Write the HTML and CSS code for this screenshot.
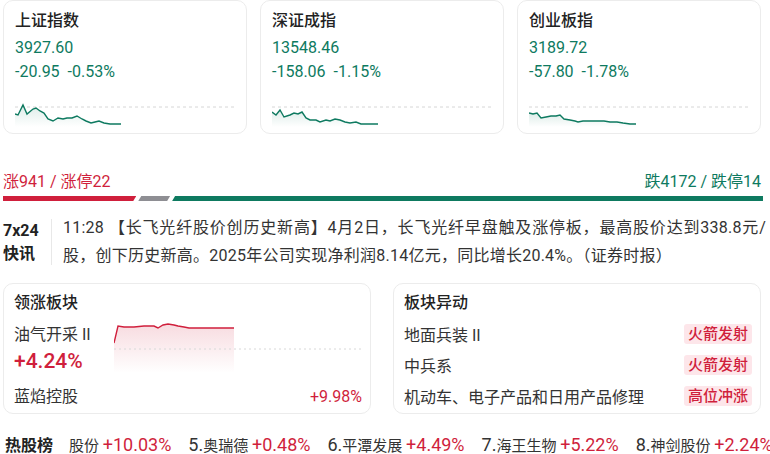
FILE: index.html
```html
<!DOCTYPE html>
<html lang="zh-CN">
<head>
  <meta charset="UTF-8">
  <meta name="viewport" content="width=device-width, initial-scale=1.0">
  <title>行情概览</title>
  <link rel="stylesheet" href="styles.css">
</head>
<body>
  <div class="page">
    <section class="indices">
      <div class="index-card">
        <div class="index-name">上证指数</div>
        <div class="index-price">3927.60</div>
        <div class="index-change"><span>-20.95</span><span>-0.53%</span></div>
        <svg class="spark" viewBox="0 0 220 27" preserveAspectRatio="none">
          <defs>
            <linearGradient id="gFill" x1="0" y1="0" x2="0" y2="1">
              <stop offset="0" stop-color="#0e7a60" stop-opacity="0.14"/>
              <stop offset="1" stop-color="#0e7a60" stop-opacity="0"/>
            </linearGradient>
          </defs>
          <line class="base" x1="0" y1="7" x2="220" y2="7"/>
          <polygon fill="url(#gFill)" points="0,14 3,15 8,5 12,14 18,9 21,8 25,11 29,13 33,19 38,21 43,18 48,19 52,18 57,18 62,16 67,19 71,21 76,23 80,22 84,21 89,23 95,24 106,24 106,27 0,27"/>
          <polyline class="line" points="0,14 3,15 8,5 12,14 18,9 21,8 25,11 29,13 33,19 38,21 43,18 48,19 52,18 57,18 62,16 67,19 71,21 76,23 80,22 84,21 89,23 95,24 106,24"/>
        </svg>
      </div>
      <div class="index-card">
        <div class="index-name">深证成指</div>
        <div class="index-price">13548.46</div>
        <div class="index-change"><span>-158.06</span><span>-1.15%</span></div>
        <svg class="spark" viewBox="0 0 220 27" preserveAspectRatio="none">
          <line class="base" x1="0" y1="7" x2="220" y2="7"/>
          <polygon fill="url(#gFill)" points="0,12 4,15 8,10 12,17 18,15 22,13 26,14 30,12 34,18 38,20 44,20 48,22 54,20 58,21 63,19 68,20 73,22 78,23 84,22 89,24 98,24 106,24 106,27 0,27"/>
          <polyline class="line" points="0,12 4,15 8,10 12,17 18,15 22,13 26,14 30,12 34,18 38,20 44,20 48,22 54,20 58,21 63,19 68,20 73,22 78,23 84,22 89,24 98,24 106,24"/>
        </svg>
      </div>
      <div class="index-card">
        <div class="index-name">创业板指</div>
        <div class="index-price">3189.72</div>
        <div class="index-change"><span>-57.80</span><span>-1.78%</span></div>
        <svg class="spark" viewBox="0 0 220 27" preserveAspectRatio="none">
          <line class="base" x1="0" y1="7" x2="220" y2="7"/>
          <polygon fill="url(#gFill)" points="0,13 4,14 8,13 12,18 17,17 22,16 27,16 31,15 35,19 41,20 46,21 49,22 54,21 61,21 68,21 75,21 81,22 88,22 94,23 101,24 107,24 107,27 0,27"/>
          <polyline class="line" points="0,13 4,14 8,13 12,18 17,17 22,16 27,16 31,15 35,19 41,20 46,21 49,22 54,21 61,21 68,21 75,21 81,22 88,22 94,23 101,24 107,24"/>
        </svg>
      </div>
    </section>

    <section class="breadth">
      <div class="breadth-labels">
        <span class="up">涨941 / 涨停22</span>
        <span class="down">跌4172 / 跌停14</span>
      </div>
      <div class="breadth-bar">
        <span class="seg seg-up" style="flex-grow:941"></span>
        <span class="seg seg-flat" style="flex-grow:225"></span>
        <span class="seg seg-down" style="flex-grow:4172"></span>
      </div>
    </section>

    <section class="news">
      <div class="news-tag"><b>7x24</b><b>快讯</b></div>
      <p class="news-text">11:28 【长飞光纤股价创历史新高】4月2日，长飞光纤早盘触及涨停板，最高股价达到338.8元/股，创下历史新高。2025年公司实现净利润8.14亿元，同比增长20.4%。（证券时报）</p>
    </section>

    <section class="boards">
      <div class="board-card">
        <div class="board-title">领涨板块</div>
        <div class="lead-row">
          <div class="lead-info">
            <div class="lead-name">油气开采 II</div>
            <div class="lead-pct">+4.24%</div>
          </div>
          <svg class="lead-chart" viewBox="0 0 247 50">
            <defs>
              <linearGradient id="rFill" x1="0" y1="0" x2="0" y2="1">
                <stop offset="0" stop-color="#d01f3c" stop-opacity="0.16"/>
                <stop offset="1" stop-color="#d01f3c" stop-opacity="0"/>
              </linearGradient>
            </defs>
            <polygon fill="url(#rFill)" points="0,20 4,3 10,4 20,4 30,3 40,3 44,5 49,2 54,1 60,2 64,3 70,4 75,5 84,5 90,5 94,5 104,5 114,5 120,5 120,50 0,50"/>
            <line class="base-dot" x1="0" y1="26" x2="247" y2="26"/>
            <polyline class="line-up" points="0,20 4,3 10,4 20,4 30,3 40,3 44,5 49,2 54,1 60,2 64,3 70,4 75,5 84,5 90,5 94,5 104,5 114,5 120,5"/>
          </svg>
        </div>
        <div class="lead-stock">
          <span>蓝焰控股</span>
          <span class="up">+9.98%</span>
        </div>
      </div>

      <div class="board-card">
        <div class="board-title">板块异动</div>
        <ul class="moves">
          <li><span>地面兵装 II</span><span class="tag">火箭发射</span></li>
          <li><span>中兵系</span><span class="tag">火箭发射</span></li>
          <li><span>机动车、电子产品和日用产品修理</span><span class="tag">高位冲涨</span></li>
        </ul>
      </div>
    </section>

    <section class="hot">
      <b class="hot-title">热股榜</b>
      <div class="hot-track">
        <div class="hot-list">
          <span>股份 <em>+10.03%</em></span>
          <span><i>5.</i>奥瑞德 <em>+0.48%</em></span>
          <span><i>6.</i>平潭发展 <em>+4.49%</em></span>
          <span><i>7.</i>海王生物 <em>+5.22%</em></span>
          <span><i>8.</i>神剑股份 <em>+2.24%</em></span>
        </div>
      </div>
    </section>
  </div>
</body>
</html>
```

FILE: styles.css
```css
* { box-sizing: border-box; }
body {
  margin: 0;
  background: #fff;
  color: #333;
  font-family: Roboto, "Noto Sans CJK SC", sans-serif;
  font-size: 16px;
  overflow: hidden;
}

.page {
  width: 770px;
  padding: 0 9px 0 3px;
}

.up { color: #d01f3c; }
.down { color: #0e7a60; }

/* index cards */
.indices {
  display: grid;
  grid-template-columns: repeat(3, 1fr);
  gap: 13px;
}

.index-card {
  border: 1px solid #ececec;
  border-radius: 10px;
  padding: 9px 11px 6px;
  height: 134px;
}

.index-name {
  font-weight: 500;
  line-height: 22px;
  color: #222;
  margin-bottom: 4px;
}

.index-price, .index-change {
  color: #0e7a60;
  line-height: 24px;
}

.index-change span + span { margin-left: 8px; }

.spark {
  display: block;
  width: 100%;
  height: 27px;
  margin-top: 16px;
}

.spark .base, .lead-chart .base-dot {
  stroke: #d6d6d6;
  stroke-width: 1;
  stroke-dasharray: 3 3;
}
.spark .line {
  fill: none;
  stroke: #0e7a60;
  stroke-width: 1.4;
}

/* up / down breadth */
.breadth { margin-top: 37px; }

.breadth-labels {
  display: flex;
  justify-content: space-between;
  line-height: 22px;
  font-size: 16px;
}

.breadth-bar {
  display: flex;
  height: 5px;
  margin: 3px -2px 0 0;
}

.seg { display: block; height: 100%; }
.seg-up {
  background: #d01f3c;
  clip-path: polygon(0 0, 100% 0, calc(100% - 3px) 100%, 0 100%);
  margin-right: -1px;
}
.seg-flat {
  background: #8e8e93;
  clip-path: polygon(3px 0, 100% 0, calc(100% - 3px) 100%, 0 100%);
  margin-left: 3px;
  margin-right: -1px;
}
.seg-down {
  background: #0e7a60;
  clip-path: polygon(3px 0, 100% 0, 100% 100%, 0 100%);
  margin-left: 3px;
}

/* news */
.news {
  display: flex;
  align-items: center;
  margin: 13px -5px 0 0;
}

.news-tag {
  display: flex;
  flex-direction: column;
  width: 49px;
  flex-shrink: 0;
  border-right: 1px solid #e8e8e8;
  line-height: 23px;
  font-size: 16px;
  color: #222;
}

.news-text {
  margin: 0;
  padding-left: 11px;
  line-height: 28px;
  letter-spacing: 0.25px;
  text-align: justify;
  color: #333;
}

/* boards */
.boards {
  display: grid;
  grid-template-columns: 1fr 1fr;
  gap: 22px;
  margin-top: 13px;
}

.board-card {
  border: 1px solid #ececec;
  border-radius: 10px;
  padding: 8px 8px 3px 10px;
  height: 131px;
}

.board-title {
  font-weight: 500;
  line-height: 22px;
  color: #222;
}

.lead-row {
  display: flex;
  margin-top: 9px;
}

.lead-info { width: 100px; flex-shrink: 0; }
.lead-name { line-height: 24px; }
.lead-pct {
  color: #d01f3c;
  font-size: 21px;
  font-weight: 500;
  line-height: 28px;
}

.lead-chart {
  display: block;
  width: 247px;
  height: 50px;
}
.lead-chart .base-dot { stroke: #d8d8d8; stroke-dasharray: 2 3; }
.lead-chart .line-up {
  fill: none;
  stroke: #d01f3c;
  stroke-width: 1.4;
}

.lead-stock {
  display: flex;
  justify-content: space-between;
  line-height: 24px;
  margin-top: 10px;
}

.moves {
  list-style: none;
  margin: 4px 0 0;
  padding: 0;
}
.moves li {
  display: flex;
  justify-content: space-between;
  align-items: center;
  height: 31px;
}

.tag {
  background: #fde6ea;
  color: #d01f3c;
  font-size: 15px;
  font-weight: 500;
  line-height: 20px;
  padding: 0 4px;
  border-radius: 3px;
}

/* hot list */
.hot {
  display: flex;
  align-items: center;
  margin-top: 19px;
  line-height: 24px;
}

.hot-title {
  font-size: 16px;
  color: #222;
  width: 62px;
  flex-shrink: 0;
  padding-left: 2px;
}

.hot-track {
  overflow: hidden;
  white-space: nowrap;
  flex: 1;
  margin-right: -9px;
}

.hot-list {
  display: flex;
  align-items: baseline;
  padding-left: 4px;
  font-size: 15px;
}
.hot-list span { margin-right: 17px; color: #333; }
.hot-list i, .hot-list em { font-style: normal; font-size: 18px; }
.hot-list em { color: #d01f3c; }
```
